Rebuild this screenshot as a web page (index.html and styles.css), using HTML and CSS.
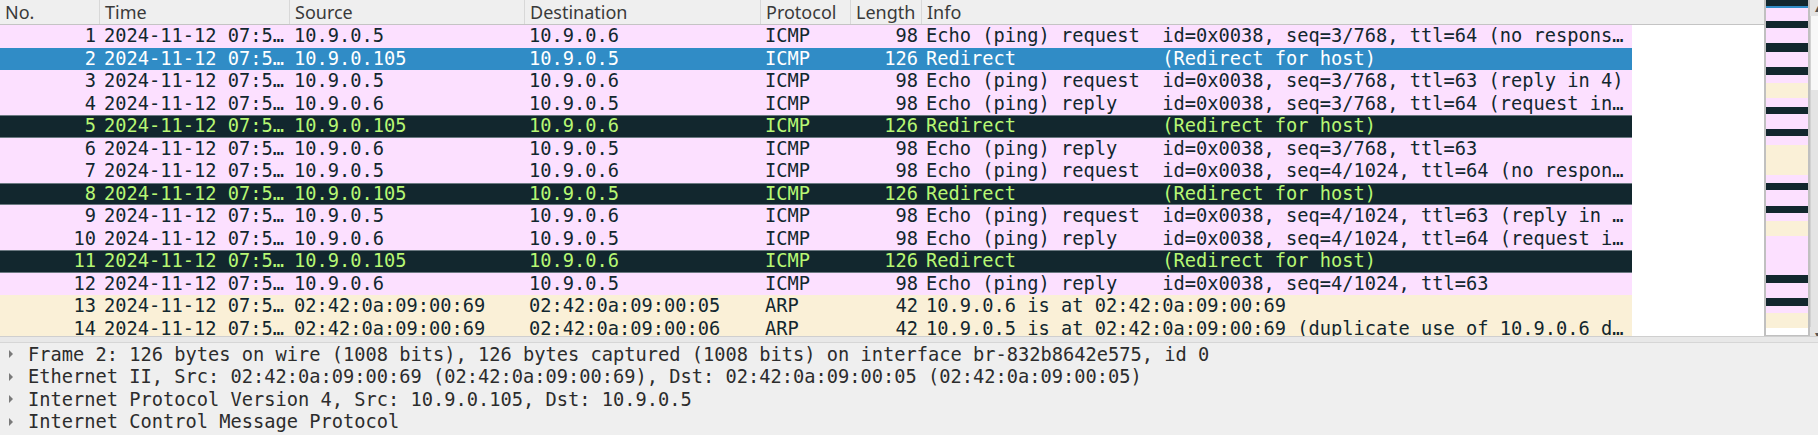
FILE: index.html
```html
<!DOCTYPE html>
<html>
<head>
<meta charset="utf-8">
<link rel="stylesheet" href="styles.css">
</head>
<body>
<div class="app">
  <div class="top">
    <div class="list">
      <div class="hdr">
        <div class="hc">No.</div>
        <div class="hc">Time</div>
        <div class="hc">Source</div>
        <div class="hc">Destination</div>
        <div class="hc">Protocol</div>
        <div class="hc">Length</div>
        <div class="hc hc-last">Info</div>
      </div>
      <div class="rows">
        <div class="row pink"><span class="c r">1</span><span class="c">2024-11-12 07:5…</span><span class="c">10.9.0.5</span><span class="c">10.9.0.6</span><span class="c">ICMP</span><span class="c r">98</span><span class="c">Echo (ping) request  id=0x0038, seq=3/768, ttl=64 (no respons…</span></div>
        <div class="row sel"><span class="c r">2</span><span class="c">2024-11-12 07:5…</span><span class="c">10.9.0.105</span><span class="c">10.9.0.5</span><span class="c">ICMP</span><span class="c r">126</span><span class="c">Redirect             (Redirect for host)</span></div>
        <div class="row pink"><span class="c r">3</span><span class="c">2024-11-12 07:5…</span><span class="c">10.9.0.5</span><span class="c">10.9.0.6</span><span class="c">ICMP</span><span class="c r">98</span><span class="c">Echo (ping) request  id=0x0038, seq=3/768, ttl=63 (reply in 4)</span></div>
        <div class="row pink"><span class="c r">4</span><span class="c">2024-11-12 07:5…</span><span class="c">10.9.0.6</span><span class="c">10.9.0.5</span><span class="c">ICMP</span><span class="c r">98</span><span class="c">Echo (ping) reply    id=0x0038, seq=3/768, ttl=64 (request in…</span></div>
        <div class="row dark"><span class="c r">5</span><span class="c">2024-11-12 07:5…</span><span class="c">10.9.0.105</span><span class="c">10.9.0.6</span><span class="c">ICMP</span><span class="c r">126</span><span class="c">Redirect             (Redirect for host)</span></div>
        <div class="row pink"><span class="c r">6</span><span class="c">2024-11-12 07:5…</span><span class="c">10.9.0.6</span><span class="c">10.9.0.5</span><span class="c">ICMP</span><span class="c r">98</span><span class="c">Echo (ping) reply    id=0x0038, seq=3/768, ttl=63</span></div>
        <div class="row pink"><span class="c r">7</span><span class="c">2024-11-12 07:5…</span><span class="c">10.9.0.5</span><span class="c">10.9.0.6</span><span class="c">ICMP</span><span class="c r">98</span><span class="c">Echo (ping) request  id=0x0038, seq=4/1024, ttl=64 (no respon…</span></div>
        <div class="row dark"><span class="c r">8</span><span class="c">2024-11-12 07:5…</span><span class="c">10.9.0.105</span><span class="c">10.9.0.5</span><span class="c">ICMP</span><span class="c r">126</span><span class="c">Redirect             (Redirect for host)</span></div>
        <div class="row pink"><span class="c r">9</span><span class="c">2024-11-12 07:5…</span><span class="c">10.9.0.5</span><span class="c">10.9.0.6</span><span class="c">ICMP</span><span class="c r">98</span><span class="c">Echo (ping) request  id=0x0038, seq=4/1024, ttl=63 (reply in …</span></div>
        <div class="row pink"><span class="c r">10</span><span class="c">2024-11-12 07:5…</span><span class="c">10.9.0.6</span><span class="c">10.9.0.5</span><span class="c">ICMP</span><span class="c r">98</span><span class="c">Echo (ping) reply    id=0x0038, seq=4/1024, ttl=64 (request i…</span></div>
        <div class="row dark"><span class="c r">11</span><span class="c">2024-11-12 07:5…</span><span class="c">10.9.0.105</span><span class="c">10.9.0.6</span><span class="c">ICMP</span><span class="c r">126</span><span class="c">Redirect             (Redirect for host)</span></div>
        <div class="row pink"><span class="c r">12</span><span class="c">2024-11-12 07:5…</span><span class="c">10.9.0.6</span><span class="c">10.9.0.5</span><span class="c">ICMP</span><span class="c r">98</span><span class="c">Echo (ping) reply    id=0x0038, seq=4/1024, ttl=63</span></div>
        <div class="row beige"><span class="c r">13</span><span class="c">2024-11-12 07:5…</span><span class="c">02:42:0a:09:00:69</span><span class="c">02:42:0a:09:00:05</span><span class="c">ARP</span><span class="c r">42</span><span class="c">10.9.0.6 is at 02:42:0a:09:00:69</span></div>
        <div class="row beige"><span class="c r">14</span><span class="c">2024-11-12 07:5…</span><span class="c">02:42:0a:09:00:69</span><span class="c">02:42:0a:09:00:06</span><span class="c">ARP</span><span class="c r">42</span><span class="c">10.9.0.5 is at 02:42:0a:09:00:69 (duplicate use of 10.9.0.6 d…</span></div>
      </div>
    </div>
    <div class="minimap">
      <div class="mm dk" style="height:6px"></div>
      <div class="mm bl" style="height:2px"></div>
      <div class="mm pk" style="height:13px"></div>
      <div class="mm dk" style="height:7px"></div>
      <div class="mm pk" style="height:15px"></div>
      <div class="mm dk" style="height:9px"></div>
      <div class="mm pk" style="height:15px"></div>
      <div class="mm dk" style="height:8px"></div>
      <div class="mm pk" style="height:8px"></div>
      <div class="mm bg" style="height:15px"></div>
      <div class="mm pk" style="height:9px"></div>
      <div class="mm dk" style="height:7px"></div>
      <div class="mm pk" style="height:15px"></div>
      <div class="mm dk" style="height:7px"></div>
      <div class="mm pk" style="height:9px"></div>
      <div class="mm bg" style="height:30px"></div>
      <div class="mm pk" style="height:8px"></div>
      <div class="mm dk" style="height:7px"></div>
      <div class="mm pk" style="height:16px"></div>
      <div class="mm dk" style="height:7px"></div>
      <div class="mm pk" style="height:8px"></div>
      <div class="mm bg" style="height:15px"></div>
      <div class="mm pk" style="height:39px"></div>
      <div class="mm dk" style="height:8px"></div>
      <div class="mm pk" style="height:15px"></div>
      <div class="mm dk" style="height:8px"></div>
      <div class="mm pk" style="height:7px"></div>
      <div class="mm bg" style="height:15px"></div>
    </div>
    <div class="vscroll">
      <div class="vs-inner">
        <div class="vs-arrow">&#9652;</div>
        <div class="vs-thumb"></div>
        <div class="vs-track"></div>
        <div class="vs-arrow">&#9662;</div>
      </div>
    </div>
  </div>
  <div class="splitter"></div>
  <div class="details">
    <div class="drow"><span class="tw"></span><span class="dt">Frame 2: 126 bytes on wire (1008 bits), 126 bytes captured (1008 bits) on interface br-832b8642e575, id 0</span></div>
    <div class="drow"><span class="tw"></span><span class="dt">Ethernet II, Src: 02:42:0a:09:00:69 (02:42:0a:09:00:69), Dst: 02:42:0a:09:00:05 (02:42:0a:09:00:05)</span></div>
    <div class="drow"><span class="tw"></span><span class="dt">Internet Protocol Version 4, Src: 10.9.0.105, Dst: 10.9.0.5</span></div>
    <div class="drow"><span class="tw"></span><span class="dt">Internet Control Message Protocol</span></div>
  </div>
</div>
</body>
</html>
```
FILE: styles.css
```css
html, body {
  margin: 0;
  padding: 0;
  background: #ffffff;
  overflow: hidden;
}
.app {
  width: 1818px;
  height: 445px;
  display: flex;
  flex-direction: column;
  background: #ffffff;
}
.top {
  height: 336px;
  display: flex;
  flex-direction: row;
  overflow: hidden;
}
.list {
  width: 1764px;
  overflow: hidden;
  background: #ffffff;
}
.hdr {
  height: 24px;
  display: grid;
  grid-template-columns: 100px 190px 235px 236px 90px 71px 710px 132px;
  background: #efefef;
  border-bottom: 1px solid #c4c4c4;
  font-family: "Noto Sans", "Open Sans", sans-serif;
  font-size: 18px;
  color: #3a3a3a;
}
.hdr::after {
  content: "";
}
.hc {
  padding-left: 5px;
  line-height: 24px;
  border-right: 1px solid #d8d8d8;
  white-space: nowrap;
  overflow: hidden;
}
.hc-last {
  border-right: none;
}
.rows {
  display: flex;
  flex-direction: column;
}
.row {
  width: 1632px;
  height: 22.5px;
  display: grid;
  grid-template-columns: 100px 190px 235px 236px 90px 71px 710px;
  font-family: "DejaVu Sans Mono", "Liberation Mono", monospace;
  font-size: 18.7px;
  line-height: 22.5px;
  flex: none;
}
.c {
  padding: 0 4px 0 4px;
  white-space: pre;
  overflow: hidden;
}
.c.r {
  text-align: right;
}
.pink {
  background: #fce0ff;
  color: #12272e;
}
.beige {
  background: #faf0d7;
  color: #12272e;
}
.dark {
  background: #12272e;
  color: #b7f774;
  box-shadow: inset 0 1px 0 #6c7a82, inset 0 -1px 0 #6c7a82;
}
.sel {
  background: #308cc6;
  color: #ffffff;
}
.minimap {
  width: 42px;
  height: 335px;
  border-left: 2px solid #c0c0c0;
  border-right: 2px solid #c0c0c0;
  border-bottom: 1px solid #c0c0c0;
  background: #ffffff;
  display: flex;
  flex-direction: column;
  flex: none;
}
.mm {
  flex: none;
}
.mm.dk { background: #12272e; }
.mm.bl { background: #308cc6; }
.mm.pk { background: #fce0ff; }
.mm.bg { background: #faf0d7; }
.vscroll {
  width: 8px;
  height: 343px;
  overflow: hidden;
  flex: none;
}
.vs-inner {
  width: 16px;
  height: 343px;
  display: flex;
  flex-direction: column;
  background: #e4e4e4;
}
.vs-arrow {
  height: 16px;
  font-size: 12px;
  line-height: 16px;
  color: #555555;
  text-align: center;
  font-family: "DejaVu Sans", sans-serif;
  flex: none;
}
.vs-thumb {
  height: 74px;
  background: #f8f8f8;
  border-left: 1px solid #d2d2d2;
  flex: none;
}
.vs-track {
  flex: 1;
  border-left: 1px solid #d2d2d2;
}
.splitter {
  height: 5px;
  background: #e8e8e8;
  border-top: 1px solid #cfcfcf;
  border-bottom: 1px solid #d6d6d6;
  flex: none;
}
.details {
  height: 92px;
  background: #efefef;
  display: flex;
  flex-direction: column;
  flex: none;
}
.drow {
  height: 22.5px;
  display: flex;
  align-items: center;
  flex: none;
  font-family: "DejaVu Sans Mono", "Liberation Mono", monospace;
  font-size: 18.7px;
  color: #2c2c2c;
}
.tw {
  width: 28px;
  height: 22.5px;
  display: flex;
  align-items: center;
  flex: none;
  position: relative;
}
.tw::before {
  content: "";
  margin-left: 9px;
  width: 0;
  height: 0;
  border-top: 4px solid transparent;
  border-bottom: 4px solid transparent;
  border-left: 4px solid #7a7a7a;
}
.dt {
  white-space: pre;
}
```
